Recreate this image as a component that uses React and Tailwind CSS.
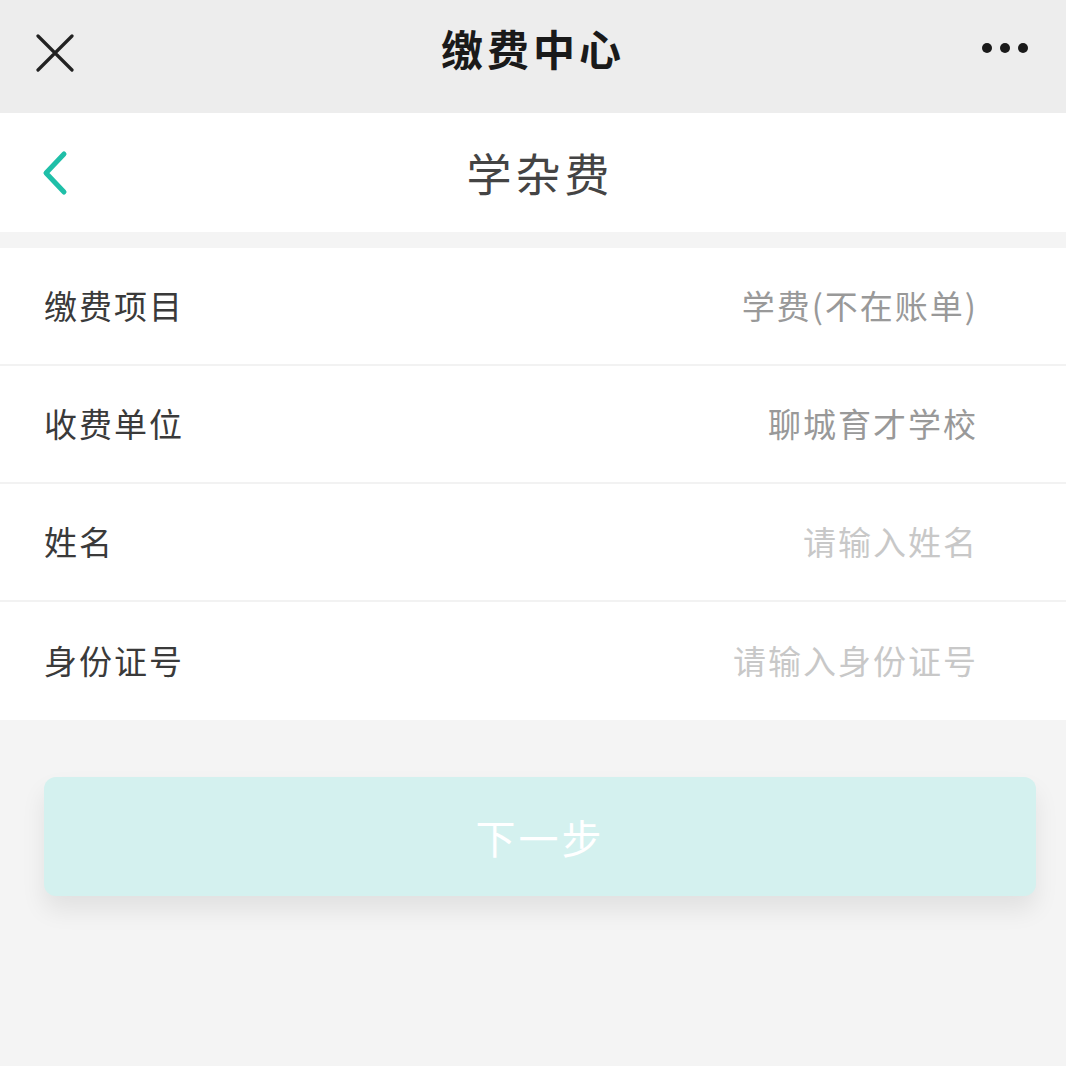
import React from 'react';

const rows = [
  { label: '缴费项目', value: '学费(不在账单)', placeholder: false },
  { label: '收费单位', value: '聊城育才学校', placeholder: false },
  { label: '姓名', value: '请输入姓名', placeholder: true },
  { label: '身份证号', value: '请输入身份证号', placeholder: true },
];

const App = () => {
  return (
    <div
      className="min-h-screen w-full bg-[#f4f4f4]"
      style={{ fontFamily: '"Noto Sans CJK SC", "Noto Sans", sans-serif' }}
    >
      {/* top bar */}
      <div className="h-[113px] bg-[#ededed] flex items-center justify-between px-[36px] relative">
        <svg width="38" height="38" viewBox="0 0 38 38" className="mb-[8px]">
          <path d="M2 2 L36 36 M36 2 L2 36" stroke="#222" strokeWidth="3.2" strokeLinecap="round" />
        </svg>
        <div className="absolute left-0 right-0 top-[16px] text-center text-[42px] font-bold text-[#1a1a1a] tracking-[4px] pointer-events-none">
          缴费中心
        </div>
        <div className="flex items-center gap-[8px] mr-[2px] mb-[18px]">
          <span className="w-[10px] h-[10px] rounded-full bg-[#1a1a1a]" />
          <span className="w-[10px] h-[10px] rounded-full bg-[#1a1a1a]" />
          <span className="w-[10px] h-[10px] rounded-full bg-[#1a1a1a]" />
        </div>
      </div>

      {/* sub header */}
      <div className="h-[119px] bg-white flex items-center relative">
        <svg width="30" height="46" viewBox="0 0 30 46" className="ml-[40px]">
          <path d="M24 4 L6 23 L24 42" stroke="#1fbfa8" strokeWidth="5" fill="none" strokeLinecap="round" strokeLinejoin="round" />
        </svg>
        <div className="absolute left-[14px] right-0 top-[26px] text-center text-[45px] text-[#444] tracking-[4px]">
          学杂费
        </div>
      </div>

      {/* form */}
      <div className="mt-[16px] bg-white">
        {rows.map((row, i) => (
          <div
            key={row.label}
            className={`h-[118px] flex items-center justify-between pl-[44px] pr-[88px] ${
              i < rows.length - 1 ? 'border-b-2 border-[#f2f2f2]' : ''
            }`}
          >
            <span className="text-[33px] text-[#3a3a3a] tracking-[2px]">{row.label}</span>
            <span
              className={`text-[33px] tracking-[2px] ${row.placeholder ? 'text-[#c8c8c8]' : 'text-[#999999]'}`}
            >
              {row.value}
            </span>
          </div>
        ))}
      </div>

      {/* button */}
      <div className="pt-[57px] pl-[44px] pr-[30px]">
        <button className="w-full h-[119px] rounded-[12px] bg-[#d4f1ef] text-white text-[40px] tracking-[3px] shadow-[0_14px_24px_rgba(0,0,0,0.08)]">
          下一步
        </button>
      </div>
    </div>
  );
};

export default App;
